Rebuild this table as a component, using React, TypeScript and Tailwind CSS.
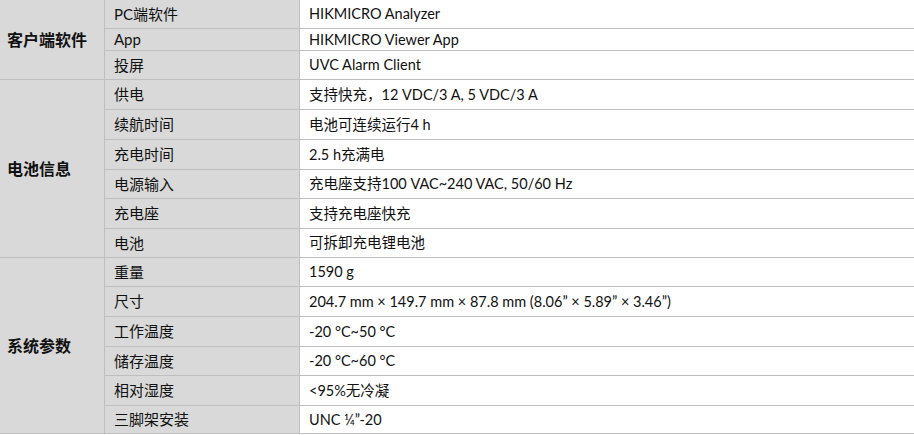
import React from 'react';

type Group = {
  title: string;
  rows: { label: string; value: string; h: string }[];
  span: string;
};

const groups: Group[] = [
  {
    title: '客户端软件',
    span: 'row-span-3',
    rows: [
      { label: 'PC端软件', value: 'HIKMICRO Analyzer', h: 'h-[29px]' },
      { label: 'App', value: 'HIKMICRO Viewer App', h: 'h-[22px]' },
      { label: '投屏', value: 'UVC Alarm Client', h: 'h-[29px]' },
    ],
  },
  {
    title: '电池信息',
    span: 'row-span-6',
    rows: [
      { label: '供电', value: '支持快充，12 VDC/3 A, 5 VDC/3 A', h: 'h-[30px]' },
      { label: '续航时间', value: '电池可连续运行4 h', h: 'h-[30px]' },
      { label: '充电时间', value: '2.5 h充满电', h: 'h-[30px]' },
      { label: '电源输入', value: '充电座支持100 VAC~240 VAC, 50/60 Hz', h: 'h-[29px]' },
      { label: '充电座', value: '支持充电座快充', h: 'h-[30px]' },
      { label: '电池', value: '可拆卸充电锂电池', h: 'h-[29px]' },
    ],
  },
  {
    title: '系统参数',
    span: 'row-span-6',
    rows: [
      { label: '重量', value: '1590 g', h: 'h-[29px]' },
      { label: '尺寸', value: '204.7 mm × 149.7 mm × 87.8 mm (8.06” × 5.89” × 3.46”)', h: 'h-[30px]' },
      { label: '工作温度', value: '-20 °C~50 °C', h: 'h-[30px]' },
      { label: '储存温度', value: '-20 °C~60 °C', h: 'h-[29px]' },
      { label: '相对湿度', value: '<95%无冷凝', h: 'h-[30px]' },
      { label: '三脚架安装', value: 'UNC ¼”-20', h: 'h-[28px]' },
    ],
  },
];

export default function App() {
  return (
    <div
      className="w-[914px] h-[435px] bg-white text-[#111] overflow-hidden"
      style={{ fontFamily: 'Lato, "Noto Sans CJK SC", sans-serif' }}
    >
      <div className="grid grid-cols-[105px_195px_1fr]">
        {groups.map((g) => (
          <React.Fragment key={g.title}>
            <div
              className={`${g.span} col-start-1 flex items-center pl-[7px] bg-[#d9d9d9] border-r border-b border-[#bfbfbf] text-[16px] font-bold`}
            >
              {g.title}
            </div>
            {g.rows.map((r) => (
              <React.Fragment key={r.label}>
                <div
                  className={`${r.h} col-start-2 flex items-center pl-[9px] bg-[#d9d9d9] border-r border-b border-[#bfbfbf] text-[15px]`}
                >
                  {r.label}
                </div>
                <div className={`${r.h} col-start-3 flex items-center pl-[9px] border-b border-[#bfbfbf] text-[14.5px]`}>
                  {r.value}
                </div>
              </React.Fragment>
            ))}
          </React.Fragment>
        ))}
      </div>
    </div>
  );
}
